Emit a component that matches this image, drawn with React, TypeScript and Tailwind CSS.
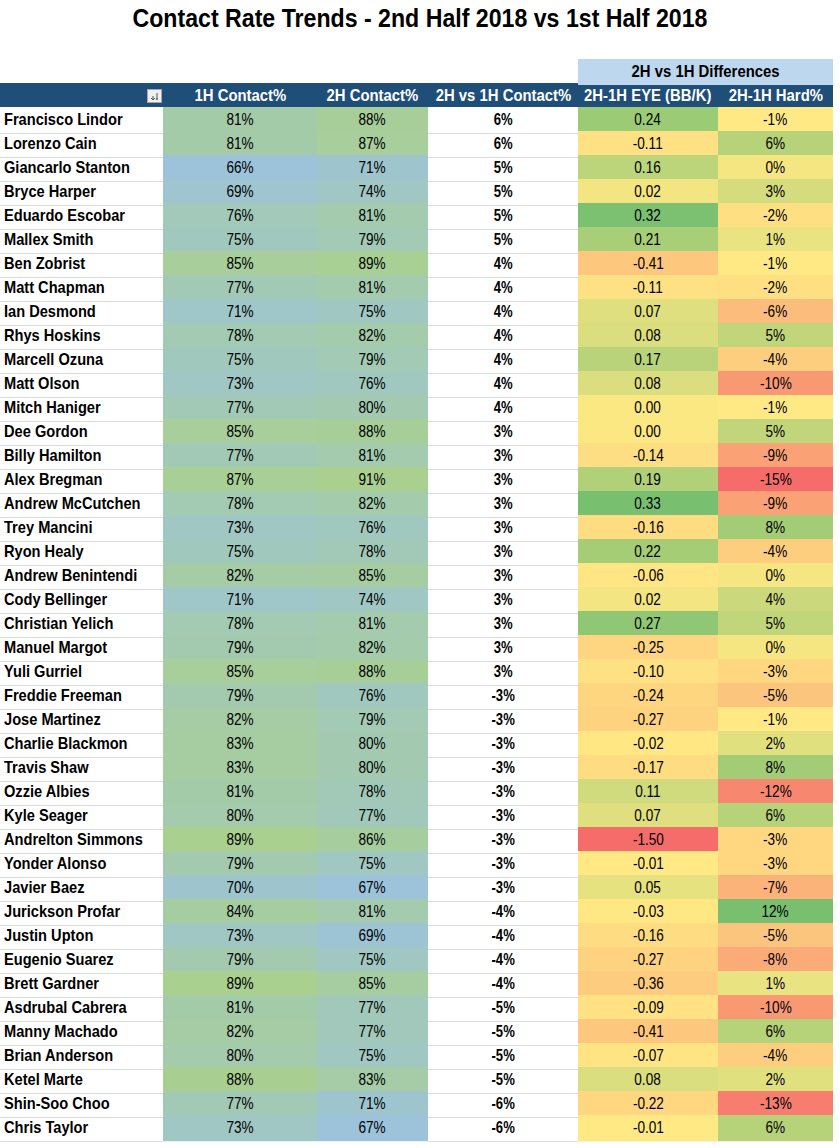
import React from 'react'

type Row = [string, number, number, number, number, number]

const rows: Row[] = [
  ['Francisco Lindor', 81, 88, 6, 0.24, -1],
  ['Lorenzo Cain', 81, 87, 6, -0.11, 6],
  ['Giancarlo Stanton', 66, 71, 5, 0.16, 0],
  ['Bryce Harper', 69, 74, 5, 0.02, 3],
  ['Eduardo Escobar', 76, 81, 5, 0.32, -2],
  ['Mallex Smith', 75, 79, 5, 0.21, 1],
  ['Ben Zobrist', 85, 89, 4, -0.41, -1],
  ['Matt Chapman', 77, 81, 4, -0.11, -2],
  ['Ian Desmond', 71, 75, 4, 0.07, -6],
  ['Rhys Hoskins', 78, 82, 4, 0.08, 5],
  ['Marcell Ozuna', 75, 79, 4, 0.17, -4],
  ['Matt Olson', 73, 76, 4, 0.08, -10],
  ['Mitch Haniger', 77, 80, 4, 0.0, -1],
  ['Dee Gordon', 85, 88, 3, 0.0, 5],
  ['Billy Hamilton', 77, 81, 3, -0.14, -9],
  ['Alex Bregman', 87, 91, 3, 0.19, -15],
  ['Andrew McCutchen', 78, 82, 3, 0.33, -9],
  ['Trey Mancini', 73, 76, 3, -0.16, 8],
  ['Ryon Healy', 75, 78, 3, 0.22, -4],
  ['Andrew Benintendi', 82, 85, 3, -0.06, 0],
  ['Cody Bellinger', 71, 74, 3, 0.02, 4],
  ['Christian Yelich', 78, 81, 3, 0.27, 5],
  ['Manuel Margot', 79, 82, 3, -0.25, 0],
  ['Yuli Gurriel', 85, 88, 3, -0.1, -3],
  ['Freddie Freeman', 79, 76, -3, -0.24, -5],
  ['Jose Martinez', 82, 79, -3, -0.27, -1],
  ['Charlie Blackmon', 83, 80, -3, -0.02, 2],
  ['Travis Shaw', 83, 80, -3, -0.17, 8],
  ['Ozzie Albies', 81, 78, -3, 0.11, -12],
  ['Kyle Seager', 80, 77, -3, 0.07, 6],
  ['Andrelton Simmons', 89, 86, -3, -1.5, -3],
  ['Yonder Alonso', 79, 75, -3, -0.01, -3],
  ['Javier Baez', 70, 67, -3, 0.05, -7],
  ['Jurickson Profar', 84, 81, -4, -0.03, 12],
  ['Justin Upton', 73, 69, -4, -0.16, -5],
  ['Eugenio Suarez', 79, 75, -4, -0.27, -8],
  ['Brett Gardner', 89, 85, -4, -0.36, 1],
  ['Asdrubal Cabrera', 81, 77, -5, -0.09, -10],
  ['Manny Machado', 82, 77, -5, -0.41, 6],
  ['Brian Anderson', 80, 75, -5, -0.07, -4],
  ['Ketel Marte', 88, 83, -5, 0.08, 2],
  ['Shin-Soo Choo', 77, 71, -6, -0.22, -13],
  ['Chris Taylor', 73, 67, -6, -0.01, 6],
]

type RGB = [number, number, number]
const mix = (a: RGB, b: RGB, t: number) => {
  const c = a.map((v, i) => Math.round(v + (b[i] - v) * Math.max(0, Math.min(1, t))))
  return `rgb(${c[0]},${c[1]},${c[2]})`
}

// colour scale endpoints
const BLUE: RGB = [156, 195, 218]
const GREEN: RGB = [169, 208, 142]
const RED: RGB = [246, 108, 106]
const YEL: RGB = [255, 233, 132]
const GRN: RGB = [120, 192, 112]

const median = (vals: number[]) => {
  const s = [...vals].sort((a, b) => a - b)
  return s[Math.floor(s.length / 2)]
}

function twoScale(vals: number[]) {
  const lo = Math.min(...vals)
  const hi = Math.max(...vals)
  return (v: number) => mix(BLUE, GREEN, (v - lo) / (hi - lo))
}

function threeScale(vals: number[]) {
  const lo = Math.min(...vals)
  const hi = Math.max(...vals)
  const mid = median(vals)
  return (v: number) =>
    v <= mid ? mix(RED, YEL, (v - lo) / (mid - lo)) : mix(YEL, GRN, (v - mid) / (hi - mid))
}

const c1 = twoScale(rows.map((r) => r[1]))
const c2 = twoScale(rows.map((r) => r[2]))
const cEye = threeScale(rows.map((r) => r[4]))
const cHard = threeScale(rows.map((r) => r[5]))

const cols = 'grid grid-cols-[163px_154px_111px_150px_140px_115px]'

function SortIcon() {
  return (
    <div className="w-[15px] h-[14px] bg-[#f0f0f0] border border-[#a6a6a6] flex items-center justify-center">
      <svg width="11" height="10" viewBox="0 0 11 10">
        <path d="M2 7 L4 9 L6 7 M4 9 V5" stroke="#555" strokeWidth="1" fill="none" />
        <path d="M8 2 V9" stroke="#555" strokeWidth="1" />
        <path d="M7 8 L9 8" stroke="#555" strokeWidth="1" />
      </svg>
    </div>
  )
}

const num = 'inline-block whitespace-nowrap scale-x-[0.8]'
const head = 'inline-block whitespace-nowrap scale-x-[0.875]'

export default function App() {
  return (
    <div className="w-[840px] h-[1148px] bg-white text-black font-['Liberation_Sans',Arial,sans-serif]">
      <div className="h-[59px] pt-[5px] flex justify-center text-[26px] font-bold leading-none">
        <span className="inline-block whitespace-nowrap scale-x-[0.89]">
          Contact Rate Trends - 2nd Half 2018 vs 1st Half 2018
        </span>
      </div>
      <div className={`${cols} h-[24px]`}>
        <div className="col-start-5 col-span-2 bg-[#bdd7ee] flex items-center justify-center text-[17px] font-bold">
          <span className={head}>2H vs 1H Differences</span>
        </div>
      </div>
      <div className={`${cols} h-[24px] bg-[#1f4e78] text-white text-[17px] font-bold w-[833px]`}>
        <div className="flex items-center justify-end pr-[1px]">
          <SortIcon />
        </div>
        <div className="flex items-center justify-center"><span className={head}>1H Contact%</span></div>
        <div className="flex items-center justify-center"><span className={head}>2H Contact%</span></div>
        <div className="flex items-center justify-center"><span className={head}>2H vs 1H Contact%</span></div>
        <div className="flex items-center justify-center"><span className={head}>2H-1H EYE (BB/K)</span></div>
        <div className="flex items-center justify-center"><span className={head}>2H-1H Hard%</span></div>
      </div>
      {rows.map(([name, h1, h2, diff, eye, hard]) => (
        <div key={name} className={`${cols} h-[24px] text-[17px]`}>
          <div className="flex items-center pl-[4px] font-bold border-b border-[#dcdcdc]">
            <span className="inline-block whitespace-nowrap origin-left scale-x-[0.86]">{name}</span>
          </div>
          <div className="flex items-center justify-center border-b border-[#eef3ee]" style={{ backgroundColor: c1(h1) }}>
            <span className={num}>{h1}%</span>
          </div>
          <div className="flex items-center justify-center border-b border-[#eef3ee]" style={{ backgroundColor: c2(h2) }}>
            <span className={num}>{h2}%</span>
          </div>
          <div className="flex items-center justify-center font-bold border-b border-[#dcdcdc]">
            <span className="inline-block whitespace-nowrap scale-x-[0.77]">{diff}%</span>
          </div>
          <div className="flex items-center justify-center border-b border-[#f5f0e6]" style={{ backgroundColor: cEye(eye) }}>
            <span className={num}>{eye.toFixed(2)}</span>
          </div>
          <div className="flex items-center justify-center border-b border-[#f5f0e6]" style={{ backgroundColor: cHard(hard) }}>
            <span className={num}>{hard}%</span>
          </div>
        </div>
      ))}
    </div>
  )
}
